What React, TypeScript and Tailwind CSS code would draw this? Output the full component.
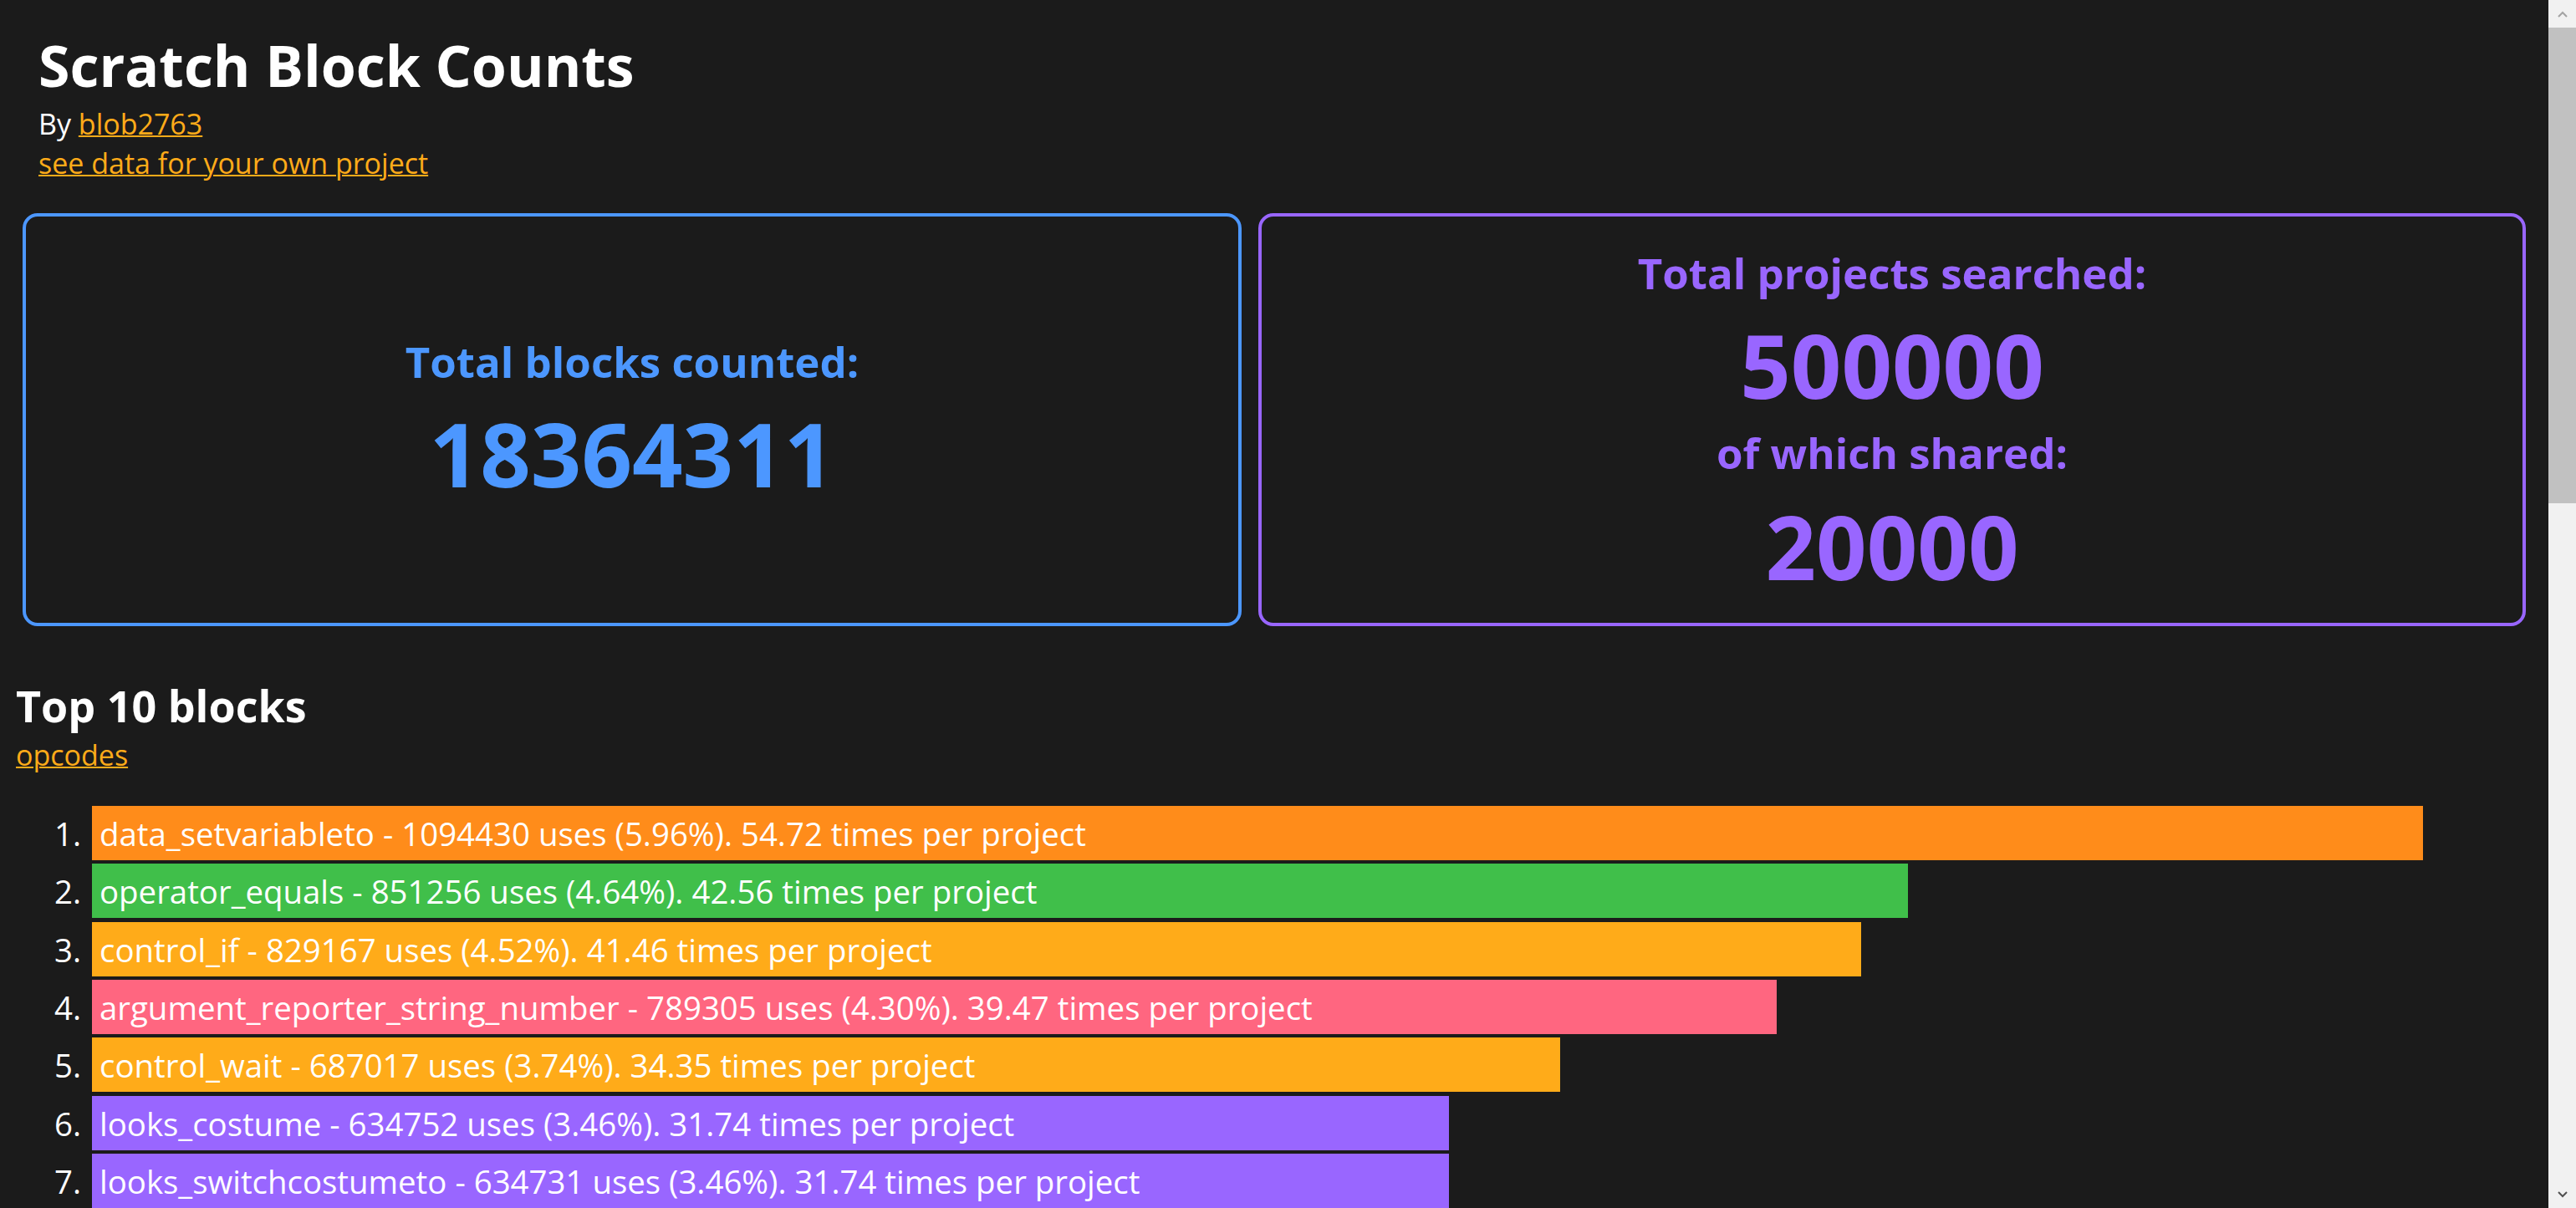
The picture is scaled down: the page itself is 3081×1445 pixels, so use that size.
const blocks = [
  { op: "data_setvariableto", count: 1094430, pct: "5.96", per: "54.72", color: "bg-[#ff8c1a]" },
  { op: "operator_equals", count: 851256, pct: "4.64", per: "42.56", color: "bg-[#40bf4a]" },
  { op: "control_if", count: 829167, pct: "4.52", per: "41.46", color: "bg-[#ffab19]" },
  { op: "argument_reporter_string_number", count: 789305, pct: "4.30", per: "39.47", color: "bg-[#ff6680]" },
  { op: "control_wait", count: 687017, pct: "3.74", per: "34.35", color: "bg-[#ffab19]" },
  { op: "looks_costume", count: 634752, pct: "3.46", per: "31.74", color: "bg-[#9966ff]" },
  { op: "looks_switchcostumeto", count: 634731, pct: "3.46", per: "31.74", color: "bg-[#9966ff]" },
];

function barWidth(count: number) {
  // bar length follows the count, plus the side padding
  return `${(count * 0.0025344 + 14.3).toFixed(1)}px`;
}

function Scrollbar() {
  return (
    <div className="flex h-full w-[33px] shrink-0 flex-col bg-[#f1f1f1]">
      <div className="flex h-[33px] items-center justify-center">
        <svg width="12" height="8" viewBox="0 0 12 8">
          <path d="M1 7 L6 2 L11 7" fill="none" stroke="#a3a3a3" strokeWidth="2" />
        </svg>
      </div>
      <div className="h-[569px] bg-[#c1c1c1]" />
      <div className="flex-1" />
      <div className="flex h-[33px] items-center justify-center">
        <svg width="12" height="8" viewBox="0 0 12 8">
          <path d="M1 1 L6 6 L11 1" fill="none" stroke="#505050" strokeWidth="2" />
        </svg>
      </div>
    </div>
  );
}

export default function App() {
  return (
    <div className="flex h-[1445px] w-full overflow-hidden bg-[#1b1b1b] font-['Open_Sans',sans-serif] text-white">
      <main className="min-w-0 flex-1">
        <header className="pl-[46px] pt-[38px]">
          <h1 className="text-[68px] leading-[80px] font-bold">Scratch Block Counts</h1>
          <p className="mt-[7px] text-[34px] leading-[47px]">
            By{" "}
            <a href="#" className="text-[#ffab19] underline decoration-2">
              blob2763
            </a>
          </p>
          <a href="#" className="block w-fit text-[34px] leading-[47px] text-[#ffab19] underline decoration-2">
            see data for your own project
          </a>
        </header>

        <section className="mt-[36px] flex gap-[20px] px-[27px]">
          <div className="flex h-[494px] w-[1458px] flex-col items-center justify-center rounded-[18px] border-4 border-[#4c97ff] pb-[5px] text-[#4c97ff]">
            <h2 className="text-[51px] leading-[60px] font-bold">Total blocks counted:</h2>
            <p className="mt-[25px] text-[106px] leading-[110px] font-bold">18364311</p>
          </div>
          <div className="flex h-[494px] flex-1 flex-col items-center justify-center rounded-[18px] border-4 border-[#9966ff] text-[#9966ff]">
            <h2 className="text-[51px] leading-[60px] font-bold">Total projects searched:</h2>
            <p className="mt-[25px] text-[106px] leading-[110px] font-bold">500000</p>
            <h2 className="mt-[20px] text-[51px] leading-[60px] font-bold">of which shared:</h2>
            <p className="mt-[27px] text-[106px] leading-[110px] font-bold">20000</p>
          </div>
        </section>

        <section className="mt-[64px] pl-[19px]">
          <h2 className="text-[52px] leading-[62px] font-bold">Top 10 blocks</h2>
          <a href="#" className="mt-[5px] block w-fit text-[34px] leading-[47px] text-[#ffab19] underline decoration-2">
            opcodes
          </a>
          <ol className="mt-[37px] flex flex-col gap-[4.33px]">
            {blocks.map((b, i) => (
              <li key={b.op} className="flex text-[38.4px]">
                <span className="w-[78px] pt-[2px] text-right leading-[63px]">{i + 1}.</span>
                <div
                  className={`ml-[13px] h-[65px] whitespace-nowrap pt-[2px] pl-[9px] leading-[63px] ${b.color}`}
                  style={{ width: barWidth(b.count) }}
                >
                  {b.op} - {b.count} uses ({b.pct}%). {b.per} times per project
                </div>
              </li>
            ))}
          </ol>
        </section>
      </main>
      <Scrollbar />
    </div>
  );
}
